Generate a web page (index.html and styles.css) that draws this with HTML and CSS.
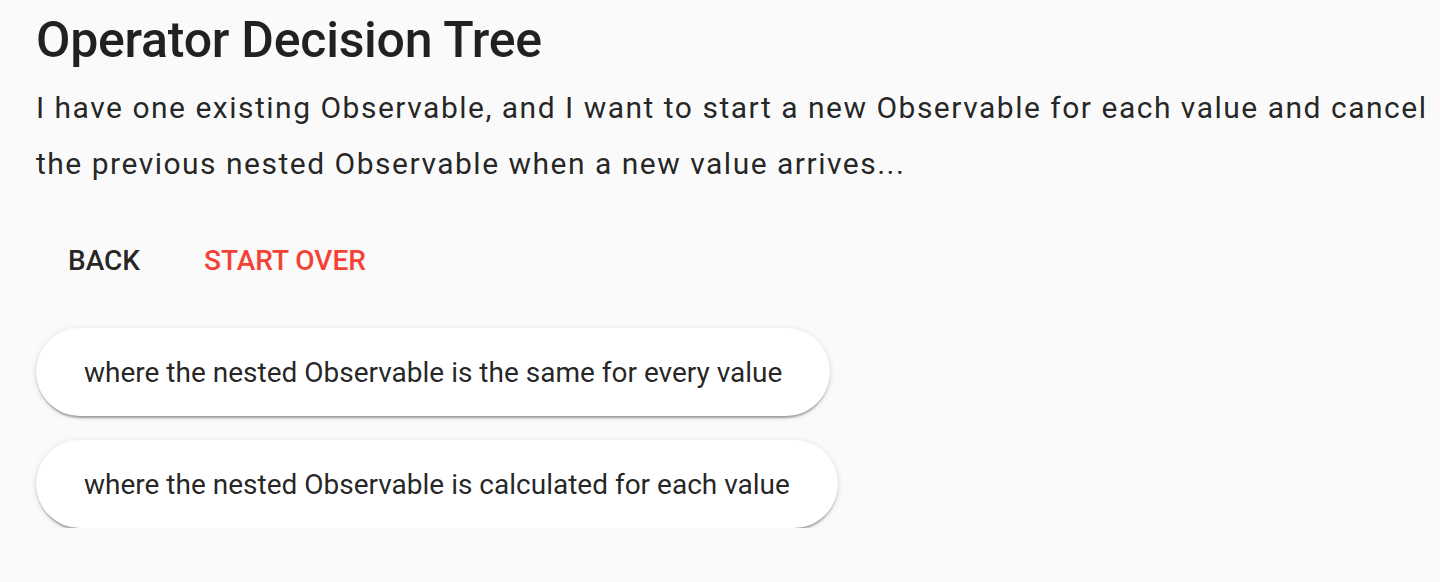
FILE: index.html
```html
<!DOCTYPE html>
<html lang="en">
<head>
<meta charset="utf-8">
<title>Operator Decision Tree</title>
<link rel="stylesheet" href="styles.css">
</head>
<body>
<main class="page">
  <h1 class="title">Operator Decision Tree</h1>
  <p class="question">I have one existing Observable, and I want to start a new Observable for each value and cancel the previous nested Observable when a new value arrives...</p>
  <div class="actions">
    <button class="text-btn">Back</button>
    <button class="text-btn text-btn--warn">Start over</button>
  </div>
  <div class="options">
    <button class="option">where the nested Observable is the same for every value</button>
    <button class="option">where the nested Observable is calculated for each value</button>
  </div>
</main>
</body>
</html>
```
FILE: styles.css
```css
html, body {
  margin: 0;
  padding: 0;
  background: #fafafa;
}
body {
  font-family: Roboto, "Noto Sans", sans-serif;
  color: rgba(0, 0, 0, 0.87);
}
.page {
  padding: 12px 0 0 36px;
}
.title {
  margin: 0;
  font-size: 50px;
  line-height: 56px;
  font-weight: 500;
  letter-spacing: -0.25px;
}
.question {
  margin: 12px 0 0;
  font-size: 30px;
  line-height: 56px;
  letter-spacing: 1.5px;
}
.actions {
  display: flex;
  margin-top: 32px;
}
.text-btn {
  height: 72px;
  min-width: 128px;
  padding: 0 32px;
  border: 0;
  background: transparent;
  font-family: Roboto, "Noto Sans", sans-serif;
  font-size: 28px;
  font-weight: 500;
  text-transform: uppercase;
  color: rgba(0, 0, 0, 0.87);
  cursor: pointer;
}
.text-btn--warn {
  color: #f44336;
}
.options {
  display: flex;
  flex-direction: column;
  align-items: flex-start;
  gap: 24px;
  margin-top: 32px;
}
.option {
  height: 88px;
  padding: 0 48px;
  border: 0;
  border-radius: 44px;
  background: #fff;
  font-family: Roboto, "Noto Sans", sans-serif;
  font-size: 28px;
  color: rgba(0, 0, 0, 0.87);
  box-shadow: 0 4px 2px -2px rgba(0,0,0,.2), 0 2px 2px 0 rgba(0,0,0,.14), 0 1px 6px 0 rgba(0,0,0,.12);
  cursor: pointer;
}
```
